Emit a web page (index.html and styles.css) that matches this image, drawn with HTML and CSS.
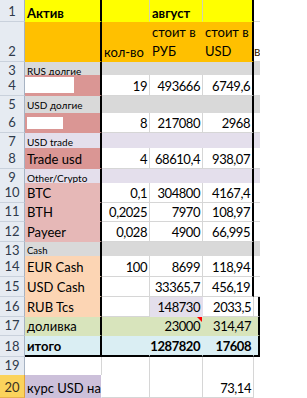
FILE: index.html
```html
<!DOCTYPE html>
<html lang="ru">
<head>
<meta charset="utf-8">
<title>Актив</title>
<link rel="stylesheet" href="styles.css">
</head>
<body>
<div class="sheet">
  <div class="row h22">
    <div class="rh">1</div>
    <div class="c a yellow bold">Актив</div>
    <div class="c yellow light-grid"></div>
    <div class="c yellow light-grid bold">август</div>
    <div class="c d yellow"></div>
    <div class="c e"></div>
    <div class="c f"></div>
  </div>
  <div class="row h40">
    <div class="rh">2</div>
    <div class="c a orange"></div>
    <div class="c orange">кол-во</div>
    <div class="c orange wrap">стоит в<br>РУБ</div>
    <div class="c d orange wrap">стоит в<br>USD</div>
    <div class="c e wrap clip-e">в</div>
    <div class="c f"></div>
  </div>
  <div class="row h13 section">
    <div class="rh">3</div>
    <div class="c a gray">RUS долгие</div>
    <div class="c gray"></div>
    <div class="c gray"></div>
    <div class="c d gray"></div>
    <div class="c e gray"></div>
    <div class="c f"></div>
  </div>
  <div class="row h21">
    <div class="rh">4</div>
    <div class="c a rose"><span class="mask mask-wide"></span></div>
    <div class="c num">19</div>
    <div class="c num">493666</div>
    <div class="c d num">6749,6</div>
    <div class="c e"></div>
    <div class="c f"></div>
  </div>
  <div class="row h17 section">
    <div class="rh">5</div>
    <div class="c a gray">USD долгие</div>
    <div class="c gray"></div>
    <div class="c gray"></div>
    <div class="c d gray"></div>
    <div class="c e gray"></div>
    <div class="c f"></div>
  </div>
  <div class="row h20">
    <div class="rh">6</div>
    <div class="c a rose"><span class="mask mask-narrow"></span></div>
    <div class="c num">8</div>
    <div class="c num">217080</div>
    <div class="c d num">2968</div>
    <div class="c e"></div>
    <div class="c f"></div>
  </div>
  <div class="row h15 section">
    <div class="rh">7</div>
    <div class="c a lavender">USD trade</div>
    <div class="c lavender"></div>
    <div class="c lavender"></div>
    <div class="c d lavender"></div>
    <div class="c e lavender"></div>
    <div class="c f"></div>
  </div>
  <div class="row h21">
    <div class="rh">8</div>
    <div class="c a rose">Trade usd</div>
    <div class="c num">4</div>
    <div class="c num">68610,4</div>
    <div class="c d num">938,07</div>
    <div class="c e"></div>
    <div class="c f"></div>
  </div>
  <div class="row h14 section">
    <div class="rh">9</div>
    <div class="c a lavender">Other/Crypto</div>
    <div class="c lavender"></div>
    <div class="c lavender"></div>
    <div class="c d lavender"></div>
    <div class="c e lavender"></div>
    <div class="c f"></div>
  </div>
  <div class="row h20">
    <div class="rh">10</div>
    <div class="c a pink">BTC</div>
    <div class="c num">0,1</div>
    <div class="c num">304800</div>
    <div class="c d num">4167,4</div>
    <div class="c e"></div>
    <div class="c f"></div>
  </div>
  <div class="row h19">
    <div class="rh">11</div>
    <div class="c a pink">BTH</div>
    <div class="c num">0,2025</div>
    <div class="c num">7970</div>
    <div class="c d num">108,97</div>
    <div class="c e"></div>
    <div class="c f"></div>
  </div>
  <div class="row h20">
    <div class="rh">12</div>
    <div class="c a pink">Payeer</div>
    <div class="c num">0,028</div>
    <div class="c num">4900</div>
    <div class="c d num">66,995</div>
    <div class="c e"></div>
    <div class="c f"></div>
  </div>
  <div class="row h14 section">
    <div class="rh">13</div>
    <div class="c a gray small">Cash</div>
    <div class="c gray"></div>
    <div class="c gray"></div>
    <div class="c d gray"></div>
    <div class="c e gray"></div>
    <div class="c f"></div>
  </div>
  <div class="row h21">
    <div class="rh">14</div>
    <div class="c a peach">EUR Cash</div>
    <div class="c num">100</div>
    <div class="c num">8699</div>
    <div class="c d num">118,94</div>
    <div class="c e"></div>
    <div class="c f"></div>
  </div>
  <div class="row h20">
    <div class="rh">15</div>
    <div class="c a peach">USD Cash</div>
    <div class="c num"></div>
    <div class="c num">33365,7</div>
    <div class="c d num">456,19</div>
    <div class="c e"></div>
    <div class="c f"></div>
  </div>
  <div class="row h20">
    <div class="rh">16</div>
    <div class="c a peach">RUB Tcs</div>
    <div class="c num"></div>
    <div class="c num lavender">148730</div>
    <div class="c num">2033,5</div>
    <div class="c e edge"></div>
    <div class="c f"></div>
  </div>
  <div class="row h19">
    <div class="rh">17</div>
    <div class="c a green">доливка</div>
    <div class="c green"></div>
    <div class="c num green note">23000</div>
    <div class="c num green">314,47</div>
    <div class="c e green edge"></div>
    <div class="c f"></div>
  </div>
  <div class="row h21 total">
    <div class="rh">18</div>
    <div class="c a blue bold">итого</div>
    <div class="c blue"></div>
    <div class="c num blue bold">1287820</div>
    <div class="c num blue bold">17608</div>
    <div class="c e blue edge"></div>
    <div class="c f"></div>
  </div>
  <div class="row h18">
    <div class="rh">19</div>
    <div class="c a-thin"></div>
    <div class="c"></div>
    <div class="c"></div>
    <div class="c"></div>
    <div class="c e plain"></div>
    <div class="c f"></div>
  </div>
  <div class="row h23">
    <div class="rh rh-active">20</div>
    <div class="c a-thin purple">курс USD на</div>
    <div class="c"></div>
    <div class="c"></div>
    <div class="c num">73,14</div>
    <div class="c e plain"></div>
    <div class="c f"></div>
  </div>
</div>
</body>
</html>
```

FILE: styles.css
```css
html, body {
  margin: 0;
  padding: 0;
  background: #ffffff;
}

body {
  font-family: Lato, "Open Sans", "Liberation Sans", sans-serif;
  font-size: 13px;
  color: #000000;
  width: 307px;
  height: 398px;
  overflow: hidden;
}

.sheet {
  display: flex;
  flex-direction: column;
}

.row {
  display: grid;
  grid-template-columns: 25px 77px 48px 53px 51px 6px 1fr;
}

.h13 { height: 13px; }
.h14 { height: 14px; }
.h15 { height: 15px; }
.h17 { height: 17px; }
.h18 { height: 18px; }
.h19 { height: 19px; }
.h20 { height: 20px; }
.h21 { height: 21px; }
.h22 { height: 22px; }
.h23 { height: 23px; }
.h40 { height: 40px; }

.rh {
  box-sizing: border-box;
  display: flex;
  align-items: flex-end;
  justify-content: center;
  padding-bottom: 2px;
  background: #e6ebf2;
  border-right: 1px solid #a7b3c3;
  border-bottom: 1px solid #c9d1dc;
  color: #2f3a4b;
  font-size: 13px;
  line-height: 16px;
}

.rh-active {
  background: #fbd35c;
  border-right-color: #e2a23a;
  border-bottom-color: #e8b24c;
  color: #3a3222;
}

.c {
  box-sizing: border-box;
  display: flex;
  align-items: flex-end;
  min-width: 0;
  overflow: hidden;
  white-space: nowrap;
  padding: 0 2px 1px 2px;
  line-height: 16px;
  border-right: 1px solid #d6d6d6;
  border-bottom: 1px solid #d6d6d6;
  background: #ffffff;
}

.num {
  justify-content: flex-end;
  letter-spacing: -0.45px;
}

.bold { font-weight: 700; }

.wrap {
  white-space: normal;
  line-height: 19px;
  padding-bottom: 0;
}

.clip-e {
  padding-left: 0;
  padding-right: 0;
  color: #3b1d00;
  overflow: hidden;
}

.h22 .c { padding-bottom: 0; }

/* section label rows */
.section .c {
  align-items: center;
  font-size: 10px;
  line-height: 12px;
  padding-bottom: 0;
}

.section .small { font-size: 9.5px; }

/* fills (a fill hides the gridlines) */
.yellow   { background: #ffff00; border-color: #ffff00; }
.orange   { background: #ffc000; border-color: #ffc000; }
.gray     { background: #d9d9d9; border-color: #d9d9d9; }
.lavender { background: #e4dfec; border-color: #e4dfec; }
.rose     { background: #da9694; border-color: #da9694; }
.pink     { background: #e6b8b7; border-color: #e6b8b7; }
.peach    { background: #fcd5b4; border-color: #fcd5b4; }
.green    { background: #d8e4bc; border-color: #d8e4bc; }
.blue     { background: #daeef3; border-color: #daeef3; }
.purple   { background: #ccc0da; border-color: #ccc0da; }

.c.light-grid { border-right-color: #d2d2b0; }

/* outline of the table */
.c.a { border-right: 2px solid #000000; }
.c.d { border-right: 2px solid #000000; }
.c.e { border-right: 0; padding: 0; }
.c.e.plain { border-bottom-color: #ffffff; }
.c.e.edge { border-right: 2px solid #000000; }
.c.f { border: 0; background: #ffffff; }

.c.a-thin { border-right: 1px solid #d6d6d6; }
.c.a-thin.purple { border-right-color: #ffffff; padding-right: 0; }

.total .c:not(.f) { border-bottom: 2px solid #000000; }

/* masked names */
.mask {
  display: block;
  align-self: flex-start;
  background: #ffffff;
}
.mask-wide {
  width: 49px;
  height: 16px;
  margin: 2px 0 0 -2px;
}
.mask-narrow {
  width: 36px;
  height: 12px;
  margin: 4px 0 0 0;
}

/* comment indicator */
.note { position: relative; }
.note::after {
  content: "";
  position: absolute;
  top: 0;
  right: 0;
  border-top: 5px solid #ff0000;
  border-left: 5px solid transparent;
}
```
